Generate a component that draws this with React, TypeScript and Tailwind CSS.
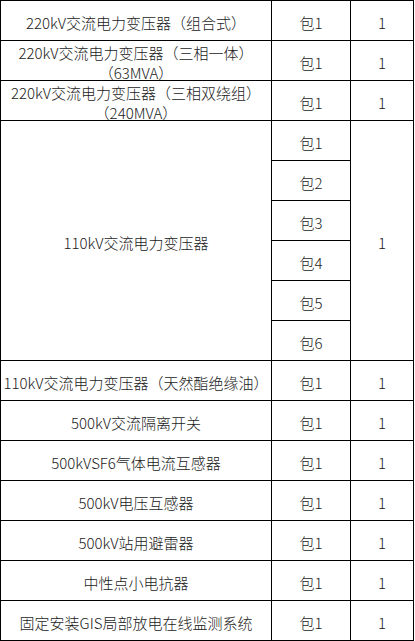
import { Fragment } from "react";

const rows: { name: string; sub?: string }[] = [
  { name: "220kV交流电力变压器（组合式）" },
  { name: "220kV交流电力变压器（三相一体）", sub: "（63MVA）" },
  { name: "220kV交流电力变压器（三相双绕组）", sub: "（240MVA）" },
];

const tail = [
  "110kV交流电力变压器（天然酯绝缘油）",
  "500kV交流隔离开关",
  "500kVSF6气体电流互感器",
  "500kV电压互感器",
  "500kV站用避雷器",
  "中性点小电抗器",
  "固定安装GIS局部放电在线监测系统",
];

const cell = "bg-white flex items-center justify-center text-center pt-[5px]";

export default function App() {
  return (
    <div className="bg-white min-h-screen font-['Noto_Sans_CJK_SC',sans-serif] font-light text-[15px] leading-[20px] text-[#1a1a1a]">
      <div className="grid w-[414px] grid-cols-[270px_78px_62px] grid-rows-[repeat(16,39px)] gap-px bg-black p-px">
        {rows.map((r) => (
          <Fragment key={r.name}>
            <div className={`${cell} flex-col`}>
              <span>{r.name}</span>
              {r.sub && <span>{r.sub}</span>}
            </div>
            <div className={cell}>包1</div>
            <div className={cell}>1</div>
          </Fragment>
        ))}

        <div className={`${cell} row-span-6`}>110kV交流电力变压器</div>
        <div className={cell}>包1</div>
        <div className={`${cell} row-span-6`}>1</div>
        {[2, 3, 4, 5, 6].map((n) => (
          <div key={n} className={cell}>
            包{n}
          </div>
        ))}

        {tail.map((t) => (
          <Fragment key={t}>
            <div className={cell}>{t}</div>
            <div className={cell}>包1</div>
            <div className={cell}>1</div>
          </Fragment>
        ))}
      </div>
    </div>
  );
}
